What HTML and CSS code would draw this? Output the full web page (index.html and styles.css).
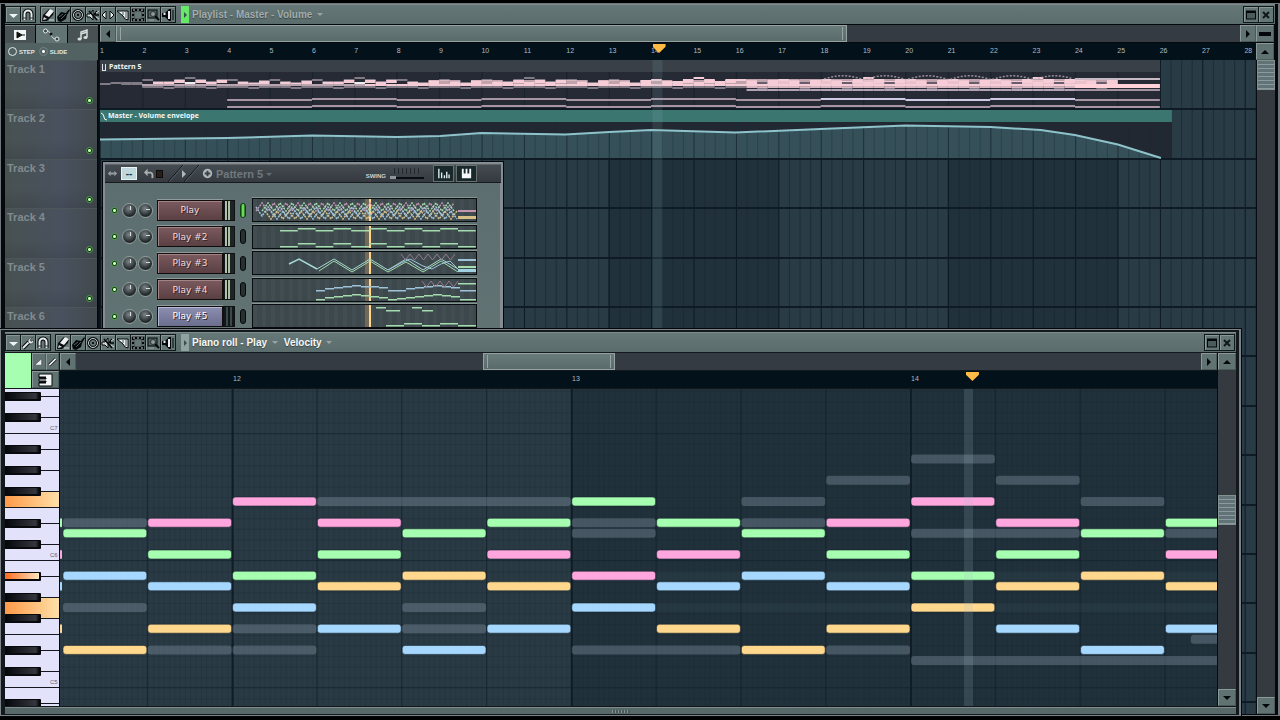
FILE: index.html
```html
<!DOCTYPE html>
<html lang="en">
<head>
<meta charset="utf-8">
<meta name="viewport" content="width=device-width, initial-scale=1">
<title>Playlist - Master - Volume</title>
<link rel="stylesheet" href="styles.css">
</head>
<body>
<svg class="defs" aria-hidden="true">
  <defs>
    <symbol id="i-menu" viewBox="0 0 14 14"><path d="M3 6h9l-4.500 4z" fill="#eef4f4"/></symbol>
    <symbol id="i-magnet" viewBox="0 0 14 14"><path d="M3.500 12V6a3.500 3.500 0 0 1 7 0v6" fill="none" stroke="#05080a" stroke-width="4"/><path d="M3.500 12V6a3.500 3.500 0 0 1 7 0v6" fill="none" stroke="#e8eeee" stroke-width="2"/><path d="M2 10h3M9 10h3" stroke="#333" /></symbol>
    <symbol id="i-wrench" viewBox="0 0 14 14"><path d="M2 12l6-6" stroke="#05080a" stroke-width="4"/><path d="M2 12l6-6" stroke="#e8eeee" stroke-width="2"/><path d="M11.500 1.500L9 4l1 1.500L12.500 4c.5 3-2 4.500-4 3.500C6 6 7 2 11.500 1.500z" fill="#e8eeee" stroke="#111" stroke-width=".5"/></symbol>
    <symbol id="i-pencil" viewBox="0 0 14 14"><path d="M1 13l1-6 6-6 5 2-1 4-6 6z" fill="#0a0e10"/><path d="M4 7l5-6 4 2-5 6z" fill="#eef2f0"/><path d="M3 9l3 2-4 1z" fill="#d8dcd6"/><path d="M8 12h5" stroke="#d8dcd6"/></symbol>
    <symbol id="i-brush" viewBox="0 0 14 14"><path d="M1 9l4-5 5 1 3-4 1 1-3 5-1 4-5 3-3-1z" fill="#06090a"/><path d="M3 9l4-3M5 11l5-5M10 4l3-3" stroke="#536062"/></symbol>
    <symbol id="i-del" viewBox="0 0 14 14"><circle cx="7" cy="7" r="4.500" fill="none" stroke="#05080a" stroke-width="3"/><circle cx="7" cy="7" r="4.500" fill="none" stroke="#cfd6d4"/><path d="M6 7h2" stroke="#111" stroke-width="2"/></symbol>
    <symbol id="i-mute" viewBox="0 0 14 14"><path d="M1 6h3l3-4v10L4 9H1z" fill="#d6dcda" stroke="#05080a"/><path d="M3 3l8 9M11 3l-3 4M9 7h4" stroke="#05080a" stroke-width="1.500"/><path d="M10 5l3-2M10 9l3 2" stroke="#d6dcda"/></symbol>
    <symbol id="i-slip" viewBox="0 0 14 14"><path d="M1 7l4-4v8zM13 7L9 3v8z" fill="#e8eeee" stroke="#05080a"/></symbol>
    <symbol id="i-slice" viewBox="0 0 14 14"><path d="M1 3h11v9L9 11 7 8z" fill="#e8eeee" stroke="#05080a"/><path d="M7 4v3M10 3v7" stroke="#4a5757"/></symbol>
    <symbol id="i-select" viewBox="0 0 14 14"><rect x="2" y="2" width="10" height="10" fill="none" stroke="#05080a" stroke-width="2.500"/><rect x="2" y="2" width="10" height="10" fill="none" stroke="#c6cecc" stroke-dasharray="2 2"/></symbol>
    <symbol id="i-zoom" viewBox="0 0 14 14"><rect x="2" y="2" width="9" height="8" fill="#526163" stroke="#05080a"/><circle cx="7" cy="6" r="2.500" fill="#8e9998" stroke="#2a3436"/><path d="M9 8l4 4" stroke="#05080a" stroke-width="2"/><path d="M3 12h5" stroke="#9aa5a4"/></symbol>
    <symbol id="i-play" viewBox="0 0 14 14"><path d="M1 5h3l4-4h2v12H8L4 9H1z" fill="#05080a"/><path d="M2.500 6h2M8 3v8" stroke="#e8eeee" stroke-width="2"/><path d="M12 2v10" stroke="#05080a"/></symbol>
    <symbol id="i-max" viewBox="0 0 14 14"><rect x="2.500" y="3" width="9" height="8" fill="#4b5b5b" stroke="#05080a"/><path d="M2 4h10" stroke="#05080a" stroke-width="2"/></symbol>
    <symbol id="i-close" viewBox="0 0 14 14"><path d="M4 4l6 6M10 4l-6 6" stroke="#10181a" stroke-width="2"/></symbol>
    <symbol id="i-left" viewBox="0 0 14 14"><path d="M9 3v8L5 7z" fill="#05080a"/></symbol>
    <symbol id="i-right" viewBox="0 0 14 14"><path d="M5 3v8l4-4z" fill="#05080a"/></symbol>
    <symbol id="i-up" viewBox="0 0 14 14"><path d="M3 9h8L7 5z" fill="#05080a"/></symbol>
    <symbol id="i-down" viewBox="0 0 14 14"><path d="M3 5h8L7 9z" fill="#05080a"/></symbol>
    <symbol id="i-dash" viewBox="0 0 14 14"><path d="M1 5h12v4H1z" fill="#05080a"/></symbol>
    <symbol id="i-clip" viewBox="0 0 14 14"><rect x="1" y="2" width="12" height="10" fill="#f2f6f6"/><path d="M4 4l5 3-5 3zM9 7h3" fill="#111" stroke="#111"/></symbol>
    <symbol id="i-auto" viewBox="0 0 18 14"><path d="M5 3c5 0 3 8 9 8" fill="none" stroke="#e0e8e8"/><circle cx="3.500" cy="3" r="2" fill="#3c4848" stroke="#e0e8e8"/><circle cx="9" cy="6" r="1.500" fill="#111"/><circle cx="15" cy="11" r="2" fill="#3c4848" stroke="#e0e8e8"/></symbol>
    <symbol id="i-note" viewBox="0 0 14 14"><path d="M5 11V4l6-2v7M5 6l6-2" fill="none" stroke="#d6dede" stroke-width="1.500"/><ellipse cx="3.500" cy="11" rx="2" ry="1.500" fill="#d6dede"/><ellipse cx="9.500" cy="9.500" rx="2" ry="1.500" fill="#d6dede"/></symbol>
    <symbol id="i-ramp" viewBox="0 0 14 14"><path d="M2 11l9-8v8z" fill="#eef2f2" stroke="#111" stroke-width=".5"/></symbol>
    <symbol id="i-line" viewBox="0 0 14 14"><path d="M3 11l8-8" stroke="#111" stroke-width="4"/><path d="M3 11l8-8" stroke="#eef2f2" stroke-width="2"/></symbol>
    <symbol id="i-keys" viewBox="0 0 16 14"><path d="M1 1h13v12H1V9h7V8H1V6h7V5H1z" fill="#f4f8f8" stroke="#05080a"/><path d="M1 4.500h7M1 9.500h7" stroke="#05080a" stroke-width="2"/></symbol>
    <symbol id="i-bars" viewBox="0 0 14 14"><path d="M2 2v10M5 6v6M8 9v3M10.500 5v7M13 8v4" stroke="#dcecec" stroke-width="1.500"/></symbol>
    <symbol id="i-piano" viewBox="0 0 14 14"><path d="M2 2h2v5h2V2h2v5h2V2h2v10H2z" fill="#f4f8f8"/></symbol>
    <symbol id="i-undo" viewBox="0 0 14 14"><path d="M3 6h5q3 0 2 6" fill="none" stroke="#a8b0b2" stroke-width="2"/><path d="M1 6l4-4v8z" fill="#a8b0b2"/></symbol>
    <symbol id="i-updown" viewBox="0 0 14 14"><path d="M2 7l3-3v2h4V4l3 3-3 3V8H5v2z" fill="#939ca0"/></symbol>
    <symbol id="i-plus" viewBox="0 0 14 14"><circle cx="7" cy="7" r="5" fill="#b0b8bc"/><path d="M7 4v6M4 7h6" stroke="#394046" stroke-width="2"/></symbol>
  </defs>
</svg>

<main class="desktop">
  <section class="window playlist" aria-label="Playlist">
    <header class="titlebar">
      <div class="tools" data-icons="menu magnet"></div>
      <div class="tools" data-icons="pencil brush del mute slip slice select zoom play"></div>
      <span class="flag flag-on"></span>
      <h1 class="title title-dim">Playlist - Master - Volume <i class="caret"></i></h1>
      <div class="tools tools-end" data-icons="max close"></div>
    </header>
    <div class="playlist-bar">
      <div class="tabs">
        <button class="tab" aria-label="Clips"><svg><use href="#i-clip"/></svg></button>
        <button class="tab tab-on" aria-label="Automation"><svg class="wide"><use href="#i-auto"/></svg></button>
        <button class="tab" aria-label="Notes"><svg><use href="#i-note"/></svg></button>
      </div>
      <div class="hscroll">
        <button class="btn" aria-label="Scroll left"><svg><use href="#i-left"/></svg></button>
        <span class="thumb thumb-playlist"></span>
        <button class="btn push" aria-label="Scroll right"><svg><use href="#i-right"/></svg></button>
      </div>
      <button class="btn btn-side" aria-label="Collapse"><svg><use href="#i-dash"/></svg></button>
    </div>
    <div class="playlist-bar playlist-time">
      <div class="modes">
        <label><input type="radio" name="mode">STEP</label>
        <label><input type="radio" name="mode" checked>SLIDE</label>
      </div>
      <div class="ruler ruler-playlist" id="bars"><i class="marker marker-playlist"></i></div>
      <button class="btn btn-side" aria-label="Scroll up"><svg><use href="#i-up"/></svg></button>
    </div>
    <div class="playlist-body">
      <ol class="tracks" id="tracks"></ol>
      <div class="arrangement">
        <svg id="arrangement" viewBox="100 60 1155 654" preserveAspectRatio="none" role="img" aria-label="Arrangement"></svg>
        <span class="clip-name"><i class="clip-mark"></i>Pattern 5</span>
        <span class="clip-name clip-name-env"><svg><path d="M1 1q3 1 3 4t3 3" fill="none" stroke="#eff"/></svg>Master - Volume envelope</span>
      </div>
      <div class="vscroll">
        <span class="vthumb"></span>
        <button class="btn btn-side push-down" aria-label="Scroll down"><svg><use href="#i-down"/></svg></button>
      </div>
    </div>
  </section>

  <section class="window pattern" aria-label="Pattern 5">
    <header class="pattern-head">
      <svg><use href="#i-updown"/></svg>
      <button class="mode-btn" aria-label="Mode">--</button>
      <svg><use href="#i-undo"/></svg>
      <i class="chip"></i>
      <svg class="slashes" viewBox="0 0 34 17"><path d="M1 17L16 0M17 17L32 0" stroke="#0b0f12"/><path d="M2 17L17 0M18 17L33 0" stroke="#5a6268"/><path d="M15 5l4 4-4 4z" fill="#b0b8bc"/></svg>
      <svg><use href="#i-plus"/></svg>
      <h2 class="pattern-title">Pattern 5 <i class="caret"></i></h2>
      <label class="swing" for="swing">SWING</label>
      <input id="swing" class="swing-range" type="range" min="0" max="100" value="0">
      <div class="views">
        <button aria-label="Graph editor"><svg><use href="#i-bars"/></svg></button>
        <button aria-label="Keyboard editor"><svg><use href="#i-piano"/></svg></button>
      </div>
    </header>
    <div class="channels" id="channels"></div>
  </section>

  <section class="window roll" aria-label="Piano roll">
    <header class="titlebar">
      <div class="tools" data-icons="menu wrench magnet"></div>
      <div class="tools" data-icons="pencil brush del mute slice select zoom play"></div>
      <span class="flag"></span>
      <h2 class="title">Piano roll - Play <i class="caret"></i></h2>
      <h2 class="title">Velocity <i class="caret"></i></h2>
      <div class="tools tools-end" data-icons="max close"></div>
    </header>
    <div class="roll-head">
      <span class="swatch"></span>
      <div class="roll-opts">
        <button class="btn" aria-label="Ramp"><svg><use href="#i-ramp"/></svg></button>
        <button class="btn" aria-label="Line"><svg><use href="#i-line"/></svg></button>
        <button class="btn btn-keys" aria-label="Keys"><svg><use href="#i-keys"/></svg></button>
      </div>
      <div class="roll-nav">
        <div class="hscroll">
          <button class="btn" aria-label="Scroll left"><svg><use href="#i-left"/></svg></button>
          <span class="thumb thumb-roll"></span>
          <button class="btn push" aria-label="Scroll right"><svg><use href="#i-right"/></svg></button>
        </div>
        <div class="ruler ruler-roll"><span></span><span>12</span><span>13</span><span>14</span><i class="marker marker-roll"></i></div>
      </div>
      <div class="roll-up"><button class="btn btn-side" aria-label="Scroll up"><svg><use href="#i-up"/></svg></button></div>
    </div>
    <div class="roll-body">
      <svg class="keys" id="keys" viewBox="5 389 54 317" preserveAspectRatio="none" role="img" aria-label="Keyboard"></svg>
      <svg class="notes" id="notes" viewBox="60 389 1157 317" preserveAspectRatio="none" role="img" aria-label="Notes"></svg>
      <div class="vscroll vscroll-roll">
        <span class="vthumb"></span>
        <button class="btn btn-side push-down" aria-label="Scroll down"><svg><use href="#i-down"/></svg></button>
      </div>
    </div>
    <footer class="roll-foot"><i class="grip"></i></footer>
  </section>
</main>
<script src="app.js"></script>
</body>
</html>
```

FILE: styles.css
```css
* { box-sizing: border-box; }
body { margin: 0; background: #000; font-family: "Liberation Sans", Arial, sans-serif; overflow: hidden; }
h1, h2, ol { margin: 0; padding: 0; font-size: 11px; list-style: none; }
button { padding: 0; margin: 0; border: 0; background: none; font: inherit; }
svg { display: block; }
.defs { position: absolute; width: 0; height: 0; }
.desktop { position: relative; height: 100vh; min-height: 400px; background: #000; }

.window { position: absolute; display: flex; flex-direction: column; overflow: hidden; }
.playlist { top: 3px; left: 0; right: 0; bottom: 4px; padding: 0 3px 1px 4px; border: 1px solid #70767c; border-right-width: 2px; background: #05090c; }
.pattern { top: 161px; left: 102px; width: 402px; height: 190px; padding: 2px; border: 1px solid #05080a; background: #868d92; }
.roll { top: 329px; left: 0; right: 39px; bottom: 4px; padding: 2px 3px 1px 4px; border: 1px solid #7b8288; border-right-width: 2px; outline: 1px solid #05080a; background: #12181c; }

.titlebar { display: flex; align-items: center; flex: none; height: 20px; margin-bottom: 1px; padding-right: 1px; gap: 4px; border-top: 1px solid #7d8b8b; background: linear-gradient(#667777, #5a6c6c); }
.tools { display: flex; height: 17px; border: 1px solid #10181a; background: #10181a; gap: 1px; }
.tools button { width: 14px; height: 15px; display: grid; place-items: center; background: #657676; box-shadow: inset 1px 1px #899797; }
.tools svg { width: 14px; height: 14px; }
.tools-end { margin-left: auto; }
.flag { width: 8px; height: 17px; margin-left: 1px; background: #91a3a0; display: grid; place-items: center; }
.flag::after { content: ""; border: 3px solid transparent; border-left-color: #34514b; border-right: 0; }
.flag-on { background: #68e868; }
.title { color: #f4f8f8; font-size: 10px; font-weight: bold; white-space: nowrap; text-shadow: 0 1px 1px #3b4646; margin-left: -1px; }
.title + .title { margin-left: 2px; }
.title-dim { color: #a2adad; }
.caret { display: inline-block; border: 3px solid transparent; border-top-color: #98a5a5; border-bottom: 0; vertical-align: 2px; margin-left: 2px; }

.btn { flex: none; display: grid; place-items: center; width: 16px; height: 17px; border: 1px solid #8b9999; border-right-color: #4b5959; border-bottom-color: #4b5959; background: #617272; }
.btn svg { width: 14px; height: 14px; }
.btn-side { width: 18px; height: 17px; }
.push { margin-left: auto; }
.push-down { margin-top: auto; }

.playlist-bar { display: grid; grid-template-columns: 95px 1fr 19px; flex: none; height: 18px; }
.playlist-time { height: 17px; }
.tabs { display: grid; grid-template-columns: repeat(3, 1fr); gap: 1px; padding-right: 2px; }
.tab { display: grid; place-items: center; background: #485254; border-top: 1px solid #788585; }
.tab-on { background: #637474; }
.tab svg { width: 14px; height: 14px; }
.tab svg.wide { width: 18px; }
.hscroll { display: flex; height: 17px; background: #353b43; min-width: 0; }
.thumb { border: 1px solid #94a2a2; background: linear-gradient(#6a7b7b, #5a6b6b); height: 17px; position: relative; }
.thumb::before, .thumb::after { content: ""; position: absolute; top: 1px; bottom: 1px; left: 3px; width: 1px; background: #96a4a4; }
.thumb::after { left: auto; right: 3px; }
.thumb-playlist { width: 63.2%; }
.thumb-roll { width: 11.4%; margin-left: 35.2%; }
.modes { display: flex; align-items: center; gap: 4px; padding-left: 3px; margin-right: 2px; background: #526162; color: #dfe8e8; font-size: 6px; font-weight: bold; }
.modes label { display: flex; align-items: center; gap: 2px; }
.modes input { appearance: none; margin: 0; width: 9px; height: 9px; border: 1px solid #dfe8e8; border-radius: 50%; }
.modes input:checked { border-color: #738383; background: radial-gradient(#fff 1px, transparent 2px); }

.ruler { display: grid; position: relative; background: #02111a; color: #aebbc2; font-size: 7px; line-height: 16px; overflow: hidden; }
.ruler-playlist { grid-template-columns: repeat(27, 11fr) 3fr; }
.ruler-roll { grid-template-columns: 173fr 339fr 339fr 306fr; height: 17px; margin-top: 1px; }
.marker { position: absolute; top: 1px; width: 13px; height: 9px; background: #ffbb45; clip-path: polygon(0 0, 100% 0, 100% 30%, 50% 100%, 0 30%); }
.marker-playlist { left: 47.8%; }
.marker-roll { left: 78.3%; }

.playlist-body { display: grid; grid-template-columns: 95px 1fr 19px; flex: 1; min-height: 0; }
.tracks { overflow: hidden; border-right: 3px solid #05080b; background: #3e454b; }
.track { display: flex; justify-content: space-between; height: 49px; padding: 2px 4px 5px 2px; border-top: 1px solid #4c555a; background: linear-gradient(90deg, rgba(70, 80, 75, .5), rgba(72, 80, 98, .6) 60%, rgba(60, 68, 72, .6)), linear-gradient(#4a5358 60%, #3b4248); color: #808b8f; font-size: 11px; font-weight: bold; }
.track:nth-child(even) { height: 50px; }
.led { align-self: flex-end; width: 7px; height: 7px; border-radius: 50%; background: radial-gradient(#d0ffc0 1px, #0b3a0c 2px); border: 1px solid #4c9b4a; }
.arrangement { position: relative; min-width: 0; min-height: 0; border-left: 2px solid #0a1014; margin-left: -2px; }
.arrangement > svg { position: absolute; inset: 0; width: 100%; height: 100%; }
.clip-name { position: absolute; top: 2px; left: 2px; display: flex; align-items: center; gap: 3px; color: #f2f6f8; font: bold 7px/10px "Open Sans", sans-serif; }
.clip-name-env { top: 51px; left: 0; gap: 0; }
.clip-name-env svg { width: 8px; height: 9px; }
.clip-mark { width: 4px; height: 7px; border: 1px solid #dde4e8; border-top: 0; }
.vscroll { display: flex; flex-direction: column; background: #353a40; border-left: 1px solid #080c0f; min-height: 0; }
.vthumb { height: 30px; border: 1px solid #84928f; background: repeating-linear-gradient(#627377 0 3px, #8b99a0 3px 4px); }

.pattern-head { display: flex; align-items: center; flex: none; height: 19px; padding: 0 24px 0 1px; border-top: 1px solid #5d646a; border-bottom: 1px solid #171b1f; background: linear-gradient(#444b51, #353a40); }
.pattern-head svg { width: 13px; height: 13px; flex: none; }
.mode-btn { width: 16px; height: 13px; margin: 0 6px 0 2px; background: #c0d8dc; border: 1px solid #e8f4f4; color: #25343a; font-size: 10px; line-height: 9px; font-weight: bold; }
.chip { width: 7px; height: 8px; background: #271e18; border: 1px solid #0e0d0c; }
.pattern-head .slashes { width: 34px; height: 17px; margin: 0 0 0 4px; }
.pattern-title { margin-left: 2px; color: #70797e; }
.pattern-title .caret { border-top-color: #656e73; margin-left: 0; }
.swing { margin-left: auto; color: #cbd2d4; font-size: 6px; font-weight: bold; padding-top: 4px; }
.swing-range { appearance: none; width: 34px; height: 12px; margin: 0 9px 0 4px; background: linear-gradient(#0a0d0f, #0a0d0f) 0 9px / 100% 2px no-repeat, repeating-linear-gradient(90deg, #22282c 0 1px, transparent 1px 4px) 4px 0 / 28px 6px no-repeat; }
.swing-range::-webkit-slider-thumb { appearance: none; width: 6px; height: 3px; margin-top: 8px; background: #8d979b; }
.views { display: flex; gap: 2px; }
.views button { display: grid; place-items: center; width: 21px; height: 17px; border: 1px solid #65706f; background: #18282b; }
.channels { flex: 1; padding: 14px 0 0 6px; background: linear-gradient(#5d6e70, #627374); margin-right: 1px; }
.channel { display: flex; align-items: center; height: 26px; }
.channel:nth-child(even) { height: 27px; }
.channel .led { align-self: center; flex: none; margin-right: 4px; }
.knob { width: 15px; height: 15px; flex: none; margin-right: 1px; border: 1px solid #93a1a1; border-radius: 50%; background: linear-gradient(#d8dede, #d8dede) 7px 2px / 1px 4px no-repeat, radial-gradient(circle at 45% 35%, #7c8689, #23292b 65%); }
.knob-pan { background: linear-gradient(#d8dede, #d8dede) 7px 5px / 4px 1px no-repeat, radial-gradient(circle at 45% 35%, #7c8689, #23292b 65%); }
.channel-btn { width: 66px; height: 21px; margin-left: 3px; flex: none; border: 1px solid #120c0d; box-shadow: inset 1px 1px #a28487, 0 -1px #909c9c; background: linear-gradient(#7b5a5e, #5a4043); color: #f1d8da; font: 9px "DejaVu Sans", sans-serif; text-shadow: 1px 1px #382629; }
.channel-alt { background: linear-gradient(#8c8fb0, #6a6d8e); box-shadow: inset 1px 1px #b6b9d6, 0 -1px #909c9c; color: #fff; }
.meter { width: 12px; height: 21px; flex: none; border: 1px solid #111; background: linear-gradient(90deg, transparent 60%, #1d2424 60%), repeating-linear-gradient(90deg, #121819 0 1px, #b0c0a8 1px 3px); }
.meter-off { background: repeating-linear-gradient(90deg, #11181a 0 2px, #3e474b 2px 4px); }
.slot { width: 6px; height: 15px; flex: none; margin: 0 6px 0 5px; border: 1px solid #05080a; border-radius: 3px; background: #26302f; }
.slot-on { background: linear-gradient(90deg, #1a5a1c, #8cff78, #1a5a1c); border-color: #0b440b; }
.strip { width: 225px; height: 24px; flex: none; border: 1px solid #080c0e; background: #3d484d; box-shadow: 0 -1px #87948f; }

.roll-head { display: grid; grid-template-columns: 26px 28px 1fr 19px; flex: none; height: 36px; }
.swatch { background: #a6ffb0; border-bottom: 1px solid #12181c; }
.roll-opts { display: grid; grid-template-columns: 1fr 1fr; grid-template-rows: 17px 17px; gap: 1px 0; padding-left: 1px; }
.roll-opts .btn { width: auto; }
.roll-opts .btn svg { width: 11px; height: 12px; }
.roll-opts .btn-keys { grid-column: 1 / 3; }
.roll-opts .btn-keys svg { width: 16px; height: 14px; }
.roll-nav { padding-left: 1px; min-width: 0; }
.roll-up { background: #353a40; border-left: 1px solid #080c0f; }
.roll-body { display: grid; grid-template-columns: 54px 1fr 19px; flex: 1; min-height: 0; }
.keys, .notes { width: 100%; height: 100%; min-width: 0; min-height: 0; }
.notes { border-left: 1px solid #05080a; }
.keys text { font: 6px "Liberation Sans", sans-serif; fill: #5c6078; }
.vscroll-roll { padding-top: 106px; }
.roll-foot { display: grid; place-items: center; flex: none; height: 7px; border-top: 1px solid #7d8b8b; margin-top: 1px; background: #58696a; }
.grip { width: 18px; height: 3px; background: repeating-linear-gradient(90deg, #86948f 0 1px, #4a5959 1px 3px); }
```

FILE: app.js
```js
const rect = (x, y, w, h, fill, extra = '') =>
  `<rect x="${x}" y="${y}" width="${w}" height="${h}" fill="${fill}" ${extra}/>`;
const line = (points, stroke, extra = '') =>
  `<polyline points="${points}" fill="none" stroke="${stroke}" ${extra}/>`;
const byId = id => document.getElementById(id);

document.querySelectorAll('[data-icons]').forEach(group => {
  group.innerHTML = group.dataset.icons.split(' ')
    .map(n => `<button aria-label="${n}"><svg><use href="#i-${n}"/></svg></button>`).join('');
});

let labels = '';
for (let n = 1; n <= 28; n++) labels += `<span>${n}</span>`;
byId('bars').insertAdjacentHTML('afterbegin', labels);

let tracks = '';
for (let n = 1; n <= 13; n++) tracks += `<li class="track">Track ${n}<i class="led"></i></li>`;
byId('tracks').innerHTML = tracks;

const BAR = 42.36;

function drawArrangement() {
  let s = '';
  for (let g = 0; g < 7; g++)
    s += rect(100 + g * 4 * BAR, 60, 4 * BAR, 654, g % 2 ? '#20313b' : '#293b45');
  for (let q = 0; q < 110; q++)
    s += rect(100 + q * BAR / 4, 60, 1, 654, q % 4 ? '#1b2a34' : '#0e1a23', q % 4 ? 'opacity=".75"' : '');
  for (let t = 1; t < 14; t++) s += rect(100, 59 + Math.round(t * 49.4), 1155, 2, '#0e1b24');

  // pattern clip
  s += rect(100, 60, 1059, 12, '#394048') + rect(100, 72, 1059, 36, '#252a35');
  for (let b = 1; b < 25; b++) s += rect(100 + b * BAR, 72, 1, 36, '#1a222b');
  const tops = [79, 81, 82, 80], pink = '#f5ccd6', grey = '#817984';
  for (let i = 0; i < 96; i++) {
    const x = 100 + i * BAR / 4, w = BAR / 4, lift = [0, 0, 0, 1, 2, 1, 0, 0][(i >> 1) % 8];
    if (i < 4) { s += rect(x, i ? 82 : 83, w, i > 1 ? 3 : 2, '#817b86'); continue; }
    const k = i % 4, y = tops[k] - lift;
    s += rect(x, y, w, 2, i > 50 ? pink : grey);
    s += rect(x, y + (k ? 1 : 5), w, 3, i > 28 || k ? pink : '#eee');
    s += rect(x, 84, w, 2, i > 24 ? pink : '#b9a4b0');
    s += rect(x, k === 2 ? 87 : 86, w, 2, grey);
    if (i > 30 && k !== 2) s += rect(x, 80, w, 5, pink, 'opacity=".75"');
    if (i > 60) s += rect(x, 79, w, 9, pink, 'opacity=".75"');
    if (i > 60 && k === 2) s += rect(x, 82, w, 2, '#675d6d');
    if (i > 60) s += rect(x, 89, w, 2, '#b3a3b6');
  }
  for (let i = 0; i < 72; i++) {
    const x = 820 + i * 3.5;
    s += rect(x, 79 - 4 * Math.abs(Math.sin((x - 820) * Math.PI / 42.36)), 2, 1.5, '#b8aab5', 'opacity=".8"');
  }
  s += rect(1074, 78, 85, 2, '#c9b9c4') + rect(1074, 84, 85, 4, '#ffd2da') + rect(1074, 89, 85, 2, '#a393a1');
  for (let b = 0; b < 11; b++) {
    const x = 227 + b * 84.72, d = b % 2, c = b > 6 && b < 10 ? '#d0c9e6' : '#a795a4';
    s += rect(x, 99 - d, 84.72, 2, c) + rect(x, 106 - d, 84.72, 2, '#a795a4');
  }

  // volume envelope clip
  s += rect(100, 110, 1071, 12, '#3c7671') + rect(100, 122, 1071, 36, '#222832');
  const env = '100,139.5 227,138 312,135.5 397,137 440,136 481,133 565,134.5 609,132 651,130 735,132.5 820,129 905,125.5 990,127 1040,130 1074,135 1117,144.5 1160,158';
  s += `<polygon points="${env} 100,158" fill="#355058"/>`;
  for (let q = 0; q < 101; q++)
    s += rect(100 + q * BAR / 4, 123, 1, 35, '#1c2c35', `opacity="${q % 4 ? .35 : .9}"`);
  s += line(env, '#8fc3cb', 'stroke-width="2"');
  s += rect(652, 60, 10, 654, '#8fb0b8', 'opacity=".14"');
  byId('arrangement').innerHTML = s;
}

function zigzag(x0, x1, step, lo, hi) {
  const pts = [];
  for (let x = x0, i = 0; x <= x1; x += step, i++) pts.push(`${x},${i % 2 ? lo : hi}`);
  return pts.join(' ');
}
function steps(x0, w, ys, color) {
  return ys.map((y, i) => rect(x0 + i * w, y, w, 1.5, color)).join('');
}

const GREEN = '#a4dcae', BLUE = '#9fc4da', PINK = '#c695b2', GOLD = '#d8bf86';
const strips = [
  () => {
    const dash = 'stroke-width="1.500" stroke-dasharray="2 1"';
    return line(zigzag(255, 457, 6, 4, 12), PINK, dash) + line(zigzag(261, 457, 6, 4, 12), GREEN, dash)
      + line(zigzag(255, 457, 6, 17, 8), BLUE, dash)
      + line(zigzag(264, 457, 6, 20, 12), GOLD, dash) + line(zigzag(270, 457, 6, 20, 12), BLUE, dash)
      + rect(457, 11, 18, 2, PINK) + rect(457, 17, 18, 3, GOLD);
  },
  () => steps(279, 17.8, [4, 2, 4, 2, 4, 2, 4, 2, 4, 2, 4], GREEN) + steps(279, 17.8, [20, 17, 20, 17, 20, 17, 20, 17, 20, 17, 20], GREEN),
  () => line('288,12 298,7 316,17', '#a8d8d4', 'stroke-width="1.500"')
    + line('316,17 333,7 351,18 369,7 387,18 405,7 422,18 440,7 457,17', '#a8d8d4')
    + line('318,19 333,9 351,20 369,9 387,20 405,10 422,20 440,9 457,20', GREEN)
    + line('387,18 400,11 409,7 422,14 431,17 440,12 449,9 457,17', BLUE)
    + line(zigzag(400, 457, 4.5, 8, 2), '#94788f') + rect(457, 7, 18, 2, BLUE) + rect(457, 14, 18, 2, GREEN) + rect(457, 17, 18, 3, '#9ed3df'),
  () => steps(315, 9, [11, 9, 8, 7, 6, 7, 7, 8, 11, 11, 9, 8, 7, 6, 7, 8, 11, 11], BLUE)
    + steps(315, 9, [20, 18, 17, 16, 15, 16, 17, 18, 20, 19, 18, 17, 16, 15, 16, 17, 20, 20], GREEN)
    + line(zigzag(421, 457, 4.5, 8, 2), '#94788f') + rect(457, 4, 18, 1.5, GREEN),
  () => rect(375, 2, 10, 1.5, GREEN) + rect(385, 5, 14, 1.5, GREEN) + rect(411, 2, 10, 1.5, GREEN) + rect(421, 5, 11, 1.5, GREEN)
    + steps(385, 18, [20, 18, 20, 18, 20], GREEN)
];

byId('channels').innerHTML = ['Play', 'Play #2', 'Play #3', 'Play #4', 'Play #5'].map((name, i) => {
  let grid = '';
  for (let x = 252; x < 475; x += 9) grid += rect(x, 0, 4, 22, '#4c5b5c', 'opacity=".3"');
  grid += rect(364, 0, 5, 22, '#c89b62', 'opacity=".4"') + rect(368, 0, 2, 22, '#ffd68e');
  return `<div class="channel"><i class="led"></i><i class="knob"></i><i class="knob knob-pan"></i>
    <button class="channel-btn ${i === 4 ? 'channel-alt' : ''}">${name}</button>
    <i class="meter ${i === 4 ? 'meter-off' : ''}"></i><i class="slot ${i ? '' : 'slot-on'}"></i>
    <svg class="strip" viewBox="252 0 223 22" preserveAspectRatio="none">${grid}${strips[i]()}</svg></div>`;
}).join('');

function drawKeys() {
  let s = `<defs><linearGradient id="hot"><stop stop-color="#ff9a48"/><stop offset="1" stop-color="#ffe0a8"/></linearGradient>
    <linearGradient id="hotkey"><stop stop-color="#ff6a20"/><stop offset="1" stop-color="#ffe6c0"/></linearGradient>
    <linearGradient id="black"><stop stop-color="#05060a"/><stop offset=".9" stop-color="#34363e"/><stop offset="1" stop-color="#08090c"/></linearGradient></defs>`;
  s += rect(5, 389, 54, 317, '#e2e2fb') + rect(5, 491, 54, 16, 'url(#hot)') + rect(5, 597, 54, 21, 'url(#hot)');
  const black = [396, 417, 449, 470, 491, 523, 544, 576, 597, 618, 650, 671, 703];
  [...black, 433, 507, 560, 634, 687].forEach(y => { s += rect(5, y, 54, 1, '#15171f'); });
  black.forEach(y => {
    s += rect(4, y - 4, 37, 9, '#08090c', 'rx="1"') + rect(5, y - 3, 34, 6, y === 576 ? 'url(#hotkey)' : 'url(#black)');
  });
  [['C7', 430], ['C6', 557], ['C5', 684]].forEach(([t, y]) => { s += `<text x="50" y="${y}">${t}</text>`; });
  byId('keys').innerHTML = s;
}

// columns of notes: [row, colour]; one entry per beat
const COLORS = { p: '#ffa6de', g: '#a6ffb0', b: '#a6d8ff', y: '#ffd88e' };
const columns = [
  'g3 b7 y14', 'p2 g5 b8 y12', 'p0 g7 b10', 'p2 g5 y8 b12', 'g3 y7 b14', 'g2 p5 y8 b12', 'g0 p7 b10',
  'g2 p5 b8 y12', 'g3 b7 y14', 'p2 g5 b8 y12', 'p0 g7 y10', 'p2 g5 y8 b12', 'g3 y7 b14', 'g2 p5 y8 b12'
];
// background notes: [first beat, beats, row]
const ghosts = [
  [0, 1, 2], [0, 1, 10], [1, 1, 14], [2, 1, 14], [2, 1, 12], [3, 3, 0], [4, 1, 10], [4, 1, 12], [6, 1, 2], [6, 1, 3],
  [6, 2, 14], [8, 1, 0], [8, 1, 2], [9, 1, -2], [9, 1, 14], [10, 1, -4], [11, 1, -2], [12, 1, 0], [10, 2, 3],
  [13, 1, 3], [10, 4, 15], [13.3, 1, 13]
];
const BEAT = 84.8, ROW = 10.6;
const noteX = c => 63 + c * BEAT, noteY = r => 497 + r * ROW;

function drawNotes() {
  let s = rect(60, 389, 511, 317, '#293a44') + rect(571, 389, 646, 317, '#20313b');
  for (let x = 63, i = 0; x < 1217; x += BEAT / 16, i++) s += rect(x, 389, 1, 317, '#16252e', 'opacity=".16"');
  for (let y = 391; y < 706; y += ROW) s += rect(60, y, 1157, 1, '#14232c', 'opacity=".2"');
  [433, 560, 687].forEach(y => { s += rect(60, y, 1157, 1, '#14232c', 'opacity=".6"'); });
  for (let c = 1; c < 14; c++) s += rect(noteX(c) - 1, 389, c % 4 === 2 ? 2 : 1, 317, '#101d27', c % 4 === 2 ? '' : 'opacity=".65"');
  [7, 10].forEach(r => { s += rect(656, noteY(r), 561, 9, '#41535f', 'opacity=".2"'); });
  ghosts.forEach(([c, n, r]) => { s += rect(noteX(c), noteY(r), n * BEAT - 1, 9, '#8fa2b2', 'rx="3" opacity=".34"'); });
  columns.forEach((col, c) => col.split(' ').forEach(n => {
    s += rect(noteX(c), noteY(+n.slice(1)), BEAT - 1, 9, COLORS[n[0]], 'rx="3" stroke="#15242c" stroke-width=".6"');
  }));
  [[2, 'g'], [5, 'p'], [8, 'b'], [12, 'y']].forEach(([r, k]) => { s += rect(60, noteY(r), 2, 9, COLORS[k], 'rx="1"'); });
  s += rect(964, 389, 9, 317, '#a8bcc8', 'opacity=".17"');
  byId('notes').innerHTML = s;
}

drawArrangement();
drawKeys();
drawNotes();
```
